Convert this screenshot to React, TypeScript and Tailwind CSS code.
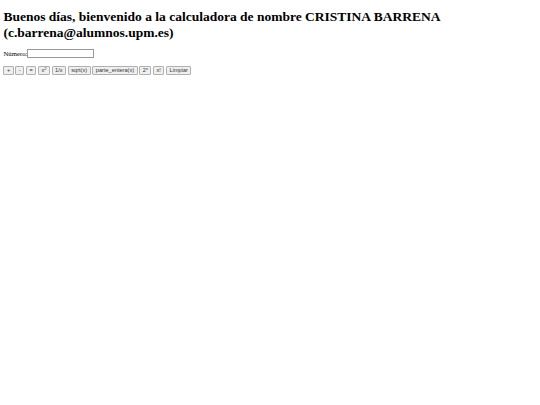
export default function App() {
  const btn =
    "h-[9px] px-[2.5px] border border-[#b0b0b0] rounded-[1px] bg-[#efefef] text-[5.6px] leading-[7px] text-[#333] flex items-center";
  const f = { fontFamily: '"Liberation Sans", Arial, sans-serif' };
  return (
    <div className="w-[540px] h-[405px] bg-white px-[3.4px] pt-[9px]" style={{ fontFamily: '"Liberation Serif", "Times New Roman", serif' }}>
      <h1 className="text-[13.5px] leading-[15.5px] font-bold text-black">
        Buenos días, bienvenido a la calculadora de nombre CRISTINA BARRENA (c.barrena@alumnos.upm.es)
      </h1>
      <div className="mt-[9px] h-[9.3px] flex items-center text-[6.75px] leading-[8px] text-black">
        <span>Número:</span>
        <div className="w-[67px] h-[9px] border border-[#999] bg-white"></div>
      </div>
      <div className="mt-[7.8px] flex items-center gap-[1.7px]" style={f}>
        <button className={btn}>+</button>
        <button className={btn}>-</button>
        <button className={btn}>=</button>
        <button className={btn}>x<sup className="text-[4px] leading-none">2</sup></button>
        <button className={btn}>1/x</button>
        <button className={btn}>sqrt(x)</button>
        <button className={btn}>parte_entera(x)</button>
        <button className={btn}>2<sup className="text-[4px] leading-none">x</sup></button>
        <button className={btn}>x!</button>
        <button className={btn}>Limpiar</button>
      </div>
    </div>
  );
}
